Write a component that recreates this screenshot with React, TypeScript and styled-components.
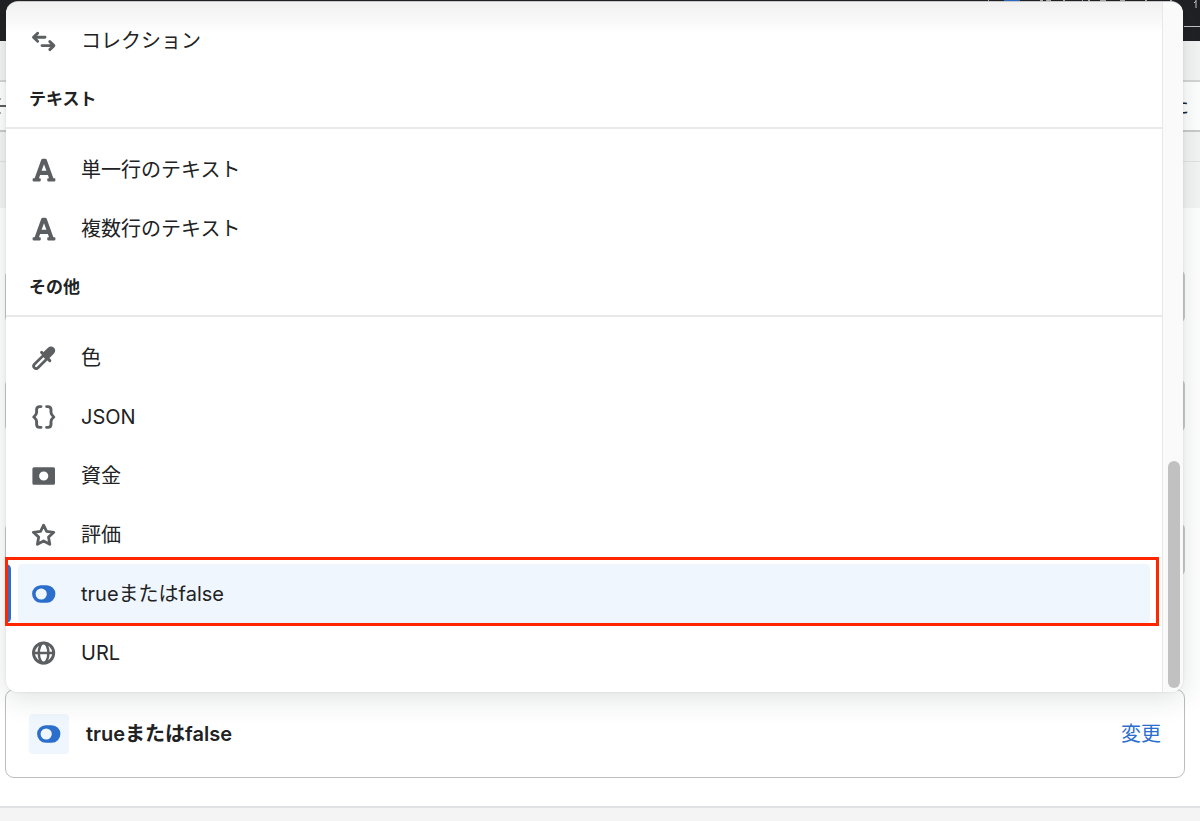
import React from "react";
import styled, { createGlobalStyle } from "styled-components";
import { FaFont } from "react-icons/fa";

const GlobalStyle = createGlobalStyle`
  *, *::before, *::after { box-sizing: border-box; }
  body {
    margin: 0;
    background: #f4f4f5;
    color: #202223;
    font-family: Inter, "Noto Sans CJK JP", sans-serif;
    font-size: 20px;
    line-height: 28px;
  }
  button, input { font: inherit; color: inherit; }
`;

const Page = styled.div`
  position: relative;
  overflow: hidden;
`;

const TopBar = styled.header`
  display: flex;
  justify-content: flex-end;
  height: 41px;
  background: #202124;
`;

const Band = styled.div<{ $height: number; $line?: boolean }>`
  height: ${(p) => p.$height}px;
  background: #f4f5f5;
  border-top: ${(p) => (p.$line ? "1px solid #e1e3e3" : "0")};
`;

const ContextBar = styled.div`
  display: flex;
  align-items: center;
  justify-content: space-between;
  height: 52px;
  padding-right: 11px;
  background: #fff;
  border-top: 2px solid #d4d5d6;
  border-bottom: 2px solid #c9cbcc;
`;

const Card = styled.main`
  display: flex;
  flex-direction: column;
  padding: 62px 15px 28px 5px;
  background: #fff;
  border-bottom: 2px solid #dfe1e2;
`;

const Field = styled.input<{ $after: number }>`
  width: 100%;
  height: 53px;
  margin: 0 0 ${(p) => p.$after}px;
  padding: 0 16px;
  background: #fff;
  border: 2px solid #c9cccf;
  border-radius: 6px;
`;

const TypeCard = styled.section`
  display: flex;
  align-items: center;
  gap: 17px;
  height: 89px;
  padding: 0 23px;
  border: 1px solid #babec1;
  border-radius: 9px;
`;

const TypeIcon = styled.span`
  display: grid;
  place-items: center;
  width: 40px;
  height: 40px;
  border-radius: 4px;
  background: #f0f6fe;
  color: #2c6ecb;
`;

const TypeName = styled.strong`
  flex: 1;
  font-weight: 600;
`;

const ChangeButton = styled.button`
  padding: 0;
  border: 0;
  background: none;
  color: #2c6ecb;
  cursor: pointer;
`;

const Popover = styled.div`
  position: absolute;
  top: 2px;
  left: 6px;
  right: 17px;
  display: flex;
  border-radius: 12px;
  background: #fff;
  box-shadow: 0 -1px 0 #c8c8c8, 0 6px 28px rgba(30, 40, 45, 0.14), 0 0 3px rgba(30, 40, 45, 0.1);
`;

const Options = styled.div`
  flex: 1;
  padding: 9px 0 10px;
  border-radius: 12px 0 0 12px;
  background: linear-gradient(#f0f0f0, #ffffff 32px);
`;

const Group = styled.ul`
  list-style: none;
  margin: 0;
  padding: 0;
`;

const GroupTitle = styled.h3`
  display: flex;
  align-items: center;
  height: 59px;
  margin: 0 0 11px;
  padding: 0 23px;
  border-bottom: 2px solid #e8eaea;
  font-size: 17px;
  font-weight: 600;
`;

const OptionItem = styled.li<{ $selected?: boolean }>`
  position: relative;
  display: flex;
  height: 59px;
  padding: 0 12px;
  color: ${(p) => (p.$selected ? "#2c6ecb" : "#5c5f62")};
  &::before {
    content: "";
    display: ${(p) => (p.$selected ? "block" : "none")};
    position: absolute;
    inset: 0 auto 0 0;
    width: 5px;
    border-radius: 0 5px 5px 0;
    background: #2c6ecb;
  }
`;

const OptionButton = styled.button<{ $selected?: boolean }>`
  flex: 1;
  display: flex;
  align-items: center;
  gap: 25px;
  padding: 0 14px;
  border: 0;
  border-radius: 4px;
  background: ${(p) => (p.$selected ? "#f0f6fe" : "transparent")};
  text-align: left;
  cursor: pointer;
`;

const OptionLabel = styled.span`
  color: #202223;
`;

const IconBox = styled.span`
  display: flex;
  align-items: center;
  justify-content: center;
  width: 24px;
  height: 24px;
`;

const LetterIcon = styled(FaFont)`
  flex: none;
  width: 26px;
  height: 26px;
`;

const Highlight = styled.span`
  position: absolute;
  inset: -7px 3px -3px -1px;
  border: 3px solid #ff2600;
  pointer-events: none;
`;

const ScrollTrack = styled.div`
  display: flex;
  flex-direction: column;
  justify-content: flex-end;
  align-items: center;
  width: 21px;
  padding: 0 0 4px 1px;
  border-left: 1px solid #e8e8e8;
  border-radius: 0 12px 12px 0;
  background: #fafafa;
`;

const ScrollThumb = styled.div`
  width: 12px;
  height: 227px;
  border-radius: 6px;
  background: #c1c1c1;
`;

const Svg = ({ children }: { children: React.ReactNode }) => (
  <svg
    width="24"
    height="24"
    viewBox="0 0 24 24"
    fill="none"
    stroke="currentColor"
    strokeWidth="2.9"
    strokeLinecap="round"
    strokeLinejoin="round"
    aria-hidden="true"
  >
    {children}
  </svg>
);

const ArrowsIcon = () => (
  <Svg>
    <path d="M13 8.200H2M5.600 4.200 1.500 8.200 5.600 12.200" />
    <path d="M10 16.600h11.600M17.800 12.600l4.100 4-4.100 4" />
  </Svg>
);

const DropperIcon = () => (
  <Svg>
    <path d="M12.2 8.6 2.4 18.2a2.5 2.5 0 0 0 3.6 3.6l9.800-9.800" strokeWidth="2.7" />
    <path d="m9.600 6.400 8.200 8.200" strokeWidth="3" />
    <path d="m19 4.600-4.200 4.200" strokeWidth="8.400" />
  </Svg>
);

const BracesIcon = () => (
  <Svg>
    <path d="M9 1.600H7.600Q4.600 1.600 4.600 4.800v2.800Q4.600 9.600 1.800 12q2.800 2.400 2.800 4.400v2.800q0 3.200 3 3.200H9" />
    <path d="M14.600 1.600H16q3 0 3 3.200v2.800q0 2 2.800 4.400-2.800 2.400-2.800 4.400v2.800q0 3.200-3 3.200h-1.400" />
  </Svg>
);

const CashIcon = () => (
  <Svg>
    <path
      d="M2 3.2h19.4A1.600 1.600 0 0 1 23 4.800v14.4a1.600 1.600 0 0 1-1.600 1.600H2a1.600 1.600 0 0 1-1.600-1.600V4.800A1.600 1.600 0 0 1 2 3.200Zm9.700 4.200a4.600 4.600 0 1 0 0 9.200 4.600 4.600 0 0 0 0-9.200Z"
      fill="currentColor"
      fillRule="evenodd"
      stroke="none"
    />
  </Svg>
);

const StarIcon = () => (
  <Svg>
    <path
      d="m11.600 2.200 3 6.200 7.200.9-5.300 4.800 1.300 7.200-6.200-3.400-6.200 3.400 1.300-7.200-5.300-4.800 7.200-.9Z"
      strokeWidth="2.800"
    />
  </Svg>
);

const ToggleIcon = () => (
  <Svg>
    <path
      d="M8.800 3.300h5.900a8.700 8.700 0 0 1 0 17.400H8.800a8.700 8.700 0 0 1 0-17.400Zm.4 3.100a5.600 5.600 0 1 0 0 11.200 5.600 5.600 0 0 0 0-11.200Z"
      fill="currentColor"
      fillRule="evenodd"
      stroke="none"
    />
  </Svg>
);

const GlobeIcon = () => (
  <Svg>
    <circle cx="11.600" cy="12" r="10.100" />
    <ellipse cx="11.600" cy="12" rx="4.800" ry="10.100" strokeWidth="2.500" />
    <path d="M1.600 12h20" strokeWidth="2.500" />
  </Svg>
);

type Option = { label: string; icon: React.ReactNode; selected?: boolean };
type OptionGroup = { title?: string; options: Option[] };

const groups: OptionGroup[] = [
  { options: [{ label: "コレクション", icon: <ArrowsIcon /> }] },
  {
    title: "テキスト",
    options: [
      { label: "単一行のテキスト", icon: <LetterIcon /> },
      { label: "複数行のテキスト", icon: <LetterIcon /> },
    ],
  },
  {
    title: "その他",
    options: [
      { label: "色", icon: <DropperIcon /> },
      { label: "JSON", icon: <BracesIcon /> },
      { label: "資金", icon: <CashIcon /> },
      { label: "評価", icon: <StarIcon /> },
      { label: "trueまたはfalse", icon: <ToggleIcon />, selected: true },
      { label: "URL", icon: <GlobeIcon /> },
    ],
  },
];

const OptionRow = ({ label, icon, selected }: Option) => (
  <OptionItem $selected={selected}>
    <OptionButton type="button" $selected={selected} aria-pressed={!!selected}>
      <IconBox>{icon}</IconBox>
      <OptionLabel>{label}</OptionLabel>
    </OptionButton>
    {selected && <Highlight />}
  </OptionItem>
);

export default function App() {
  return (
    <>
      <GlobalStyle />
      <Page>
        <TopBar>
          <svg width="216" height="41" viewBox="0 0 216 41" aria-hidden="true">
            <path d="M20 0h16v2H20z" fill="#2c6ecb" />
            <path
              d="M4 0h1v2H4zM56 0h3v1h-3zM62 0h5v1h-5zM79 0h2v2h-2zM98 0h1v2h-1zM104 0h2v2h-2zM116 0h6v1h-6zM136 0h5v1h-5zM161 0h2v1h-2zM186 0h2v2h-2z"
              fill="#aaaaac"
            />
            <path d="M212 0v8M210 3l2-2M200 26.500h16" stroke="#c4c4c6" fill="none" />
          </svg>
        </TopBar>
        <Band $height={39} />
        <ContextBar>
          <svg width="8" height="20" viewBox="0 0 8 20" aria-hidden="true">
            <path d="M0 10h8" stroke="#5c5f62" strokeWidth="2" />
            <path d="M0 2v2M0 16v2" stroke="#5c5f62" />
          </svg>
          <span>た</span>
        </ContextBar>
        <Band $height={29} />
        <Band $height={47} $line />
        <Card>
          <Field $after={56} aria-label="名前" />
          <Field $after={91} aria-label="キー" />
          <Field $after={113} aria-label="説明" />
          <TypeCard>
            <TypeIcon>
              <ToggleIcon />
            </TypeIcon>
            <TypeName>trueまたはfalse</TypeName>
            <ChangeButton type="button">変更</ChangeButton>
          </TypeCard>
        </Card>
        <Popover>
          <Options>
            {groups.map((group, i) => (
              <React.Fragment key={i}>
                {group.title && <GroupTitle>{group.title}</GroupTitle>}
                <Group>
                  {group.options.map((option) => (
                    <OptionRow key={option.label} {...option} />
                  ))}
                </Group>
              </React.Fragment>
            ))}
          </Options>
          <ScrollTrack>
            <ScrollThumb />
          </ScrollTrack>
        </Popover>
      </Page>
    </>
  );
}
